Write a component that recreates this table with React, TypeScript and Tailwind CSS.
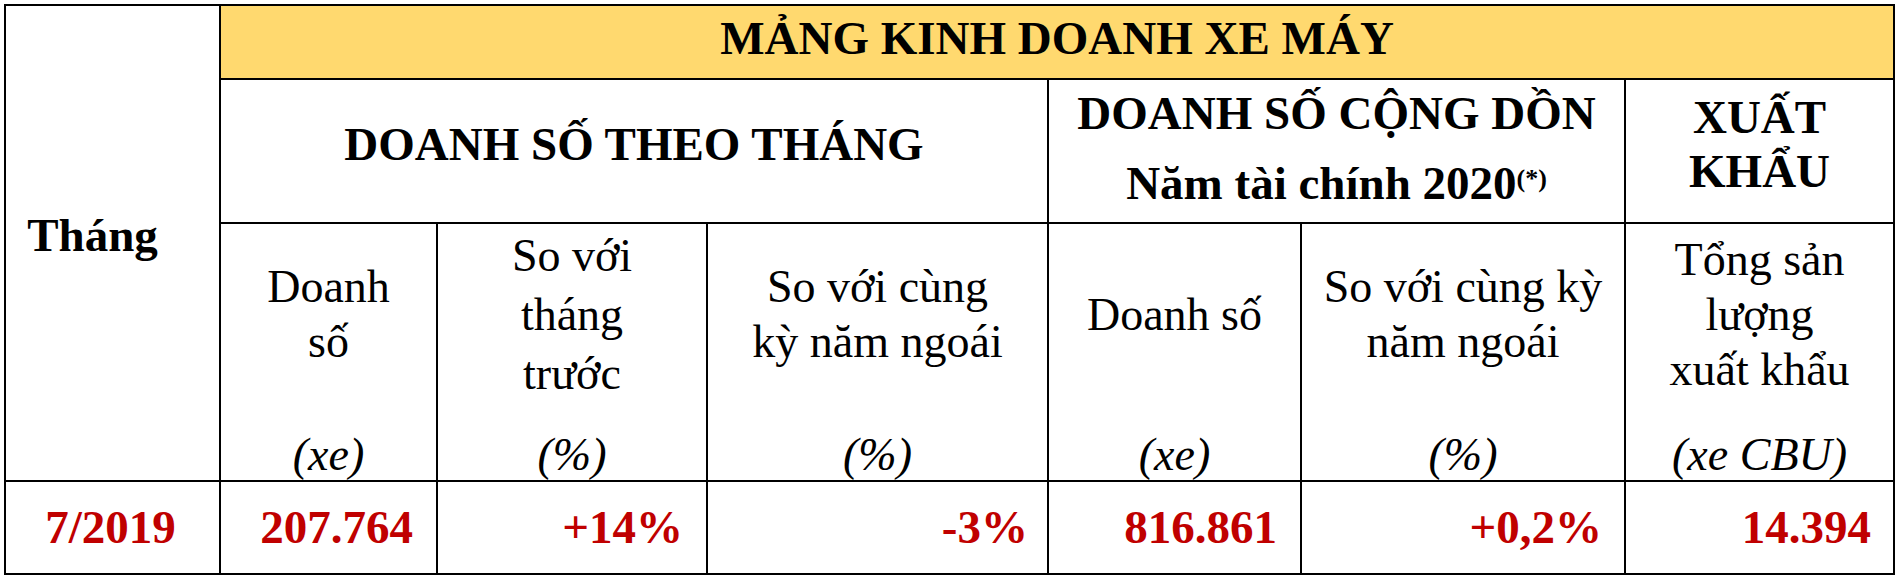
export default function App() {
  const cell = "border-2 border-black p-0 align-top";
  const unit = "h-[52px] mt-[24px] flex items-center justify-center italic";
  const main = "h-[180px] flex items-center justify-center text-center leading-[55px] whitespace-nowrap";

  return (
    <div className="w-[1902px] h-[580px] bg-white pl-[4px] pt-[4px] font-['Liberation_Serif',serif] text-black">
      <table className="table-fixed border-collapse w-[1889px]">
        <colgroup>
          <col className="w-[215px]" />
          <col className="w-[217px]" />
          <col className="w-[270px]" />
          <col className="w-[341px]" />
          <col className="w-[253px]" />
          <col className="w-[324px]" />
          <col className="w-[269px]" />
        </colgroup>
        <tbody>
          <tr>
            <td rowSpan={3} className={cell}>
              <div className="h-[474px] flex items-center justify-center font-bold text-[47px] pr-[40px] pb-[16px]">
                Tháng
              </div>
            </td>
            <td colSpan={6} className={`${cell} bg-[#ffd96f]`}>
              <div className="h-[72px] flex items-center justify-center font-bold text-[47px] pb-[8px]">
                MẢNG KINH DOANH XE MÁY
              </div>
            </td>
          </tr>
          <tr>
            <td colSpan={3} className={cell}>
              <div className="h-[142px] flex items-center justify-center font-bold text-[47px] pb-[14px]">
                DOANH SỐ THEO THÁNG
              </div>
            </td>
            <td colSpan={2} className={cell}>
              <div className="h-[142px] flex flex-col items-center justify-center font-bold text-[47px] leading-[70px] whitespace-nowrap pb-[6px]">
                <span>DOANH SỐ CỘNG DỒN</span>
                <span>
                  Năm tài chính 2020
                  <span className="text-[26px] align-top relative top-[-4px]">(*)</span>
                </span>
              </div>
            </td>
            <td className={cell}>
              <div className="h-[142px] flex flex-col items-center justify-center font-bold text-[47px] leading-[54px] pb-[14px]">
                <span>XUẤT</span>
                <span>KHẨU</span>
              </div>
            </td>
          </tr>
          <tr className="text-[46px]">
            <td className={cell}>
              <div className="h-[256px] flex flex-col">
                <div className={main}>
                  Doanh
                  <br />
                  số
                </div>
                <div className={unit}>(xe)</div>
              </div>
            </td>
            <td className={cell}>
              <div className="h-[256px] flex flex-col">
                <div className={`${main} leading-[59px]`}>
                  So với
                  <br />
                  tháng
                  <br />
                  trước
                </div>
                <div className={unit}>(%)</div>
              </div>
            </td>
            <td className={cell}>
              <div className="h-[256px] flex flex-col">
                <div className={main}>
                  So với cùng
                  <br />
                  kỳ năm ngoái
                </div>
                <div className={unit}>(%)</div>
              </div>
            </td>
            <td className={cell}>
              <div className="h-[256px] flex flex-col">
                <div className={main}>Doanh số</div>
                <div className={unit}>(xe)</div>
              </div>
            </td>
            <td className={cell}>
              <div className="h-[256px] flex flex-col">
                <div className={main}>
                  So với cùng kỳ
                  <br />
                  năm ngoái
                </div>
                <div className={unit}>(%)</div>
              </div>
            </td>
            <td className={cell}>
              <div className="h-[256px] flex flex-col">
                <div className={main}>
                  Tổng sản
                  <br />
                  lượng
                  <br />
                  xuất khẩu
                </div>
                <div className={unit}>(xe CBU)</div>
              </div>
            </td>
          </tr>
          <tr className="font-bold text-[47px] text-[#c00000]">
            <td className={cell}>
              <div className="h-[91px] flex items-center justify-center pr-[4px]">7/2019</div>
            </td>
            <td className={cell}>
              <div className="h-[91px] flex items-center justify-end pr-[23px]">207.764</div>
            </td>
            <td className={cell}>
              <div className="h-[91px] flex items-center justify-end pr-[23px]">+14%</div>
            </td>
            <td className={cell}>
              <div className="h-[91px] flex items-center justify-end pr-[19px]">-3%</div>
            </td>
            <td className={cell}>
              <div className="h-[91px] flex items-center justify-end pr-[23px]">816.861</div>
            </td>
            <td className={cell}>
              <div className="h-[91px] flex items-center justify-end pr-[22px]">+0,2%</div>
            </td>
            <td className={cell}>
              <div className="h-[91px] flex items-center justify-end pr-[22px]">14.394</div>
            </td>
          </tr>
        </tbody>
      </table>
    </div>
  );
}
